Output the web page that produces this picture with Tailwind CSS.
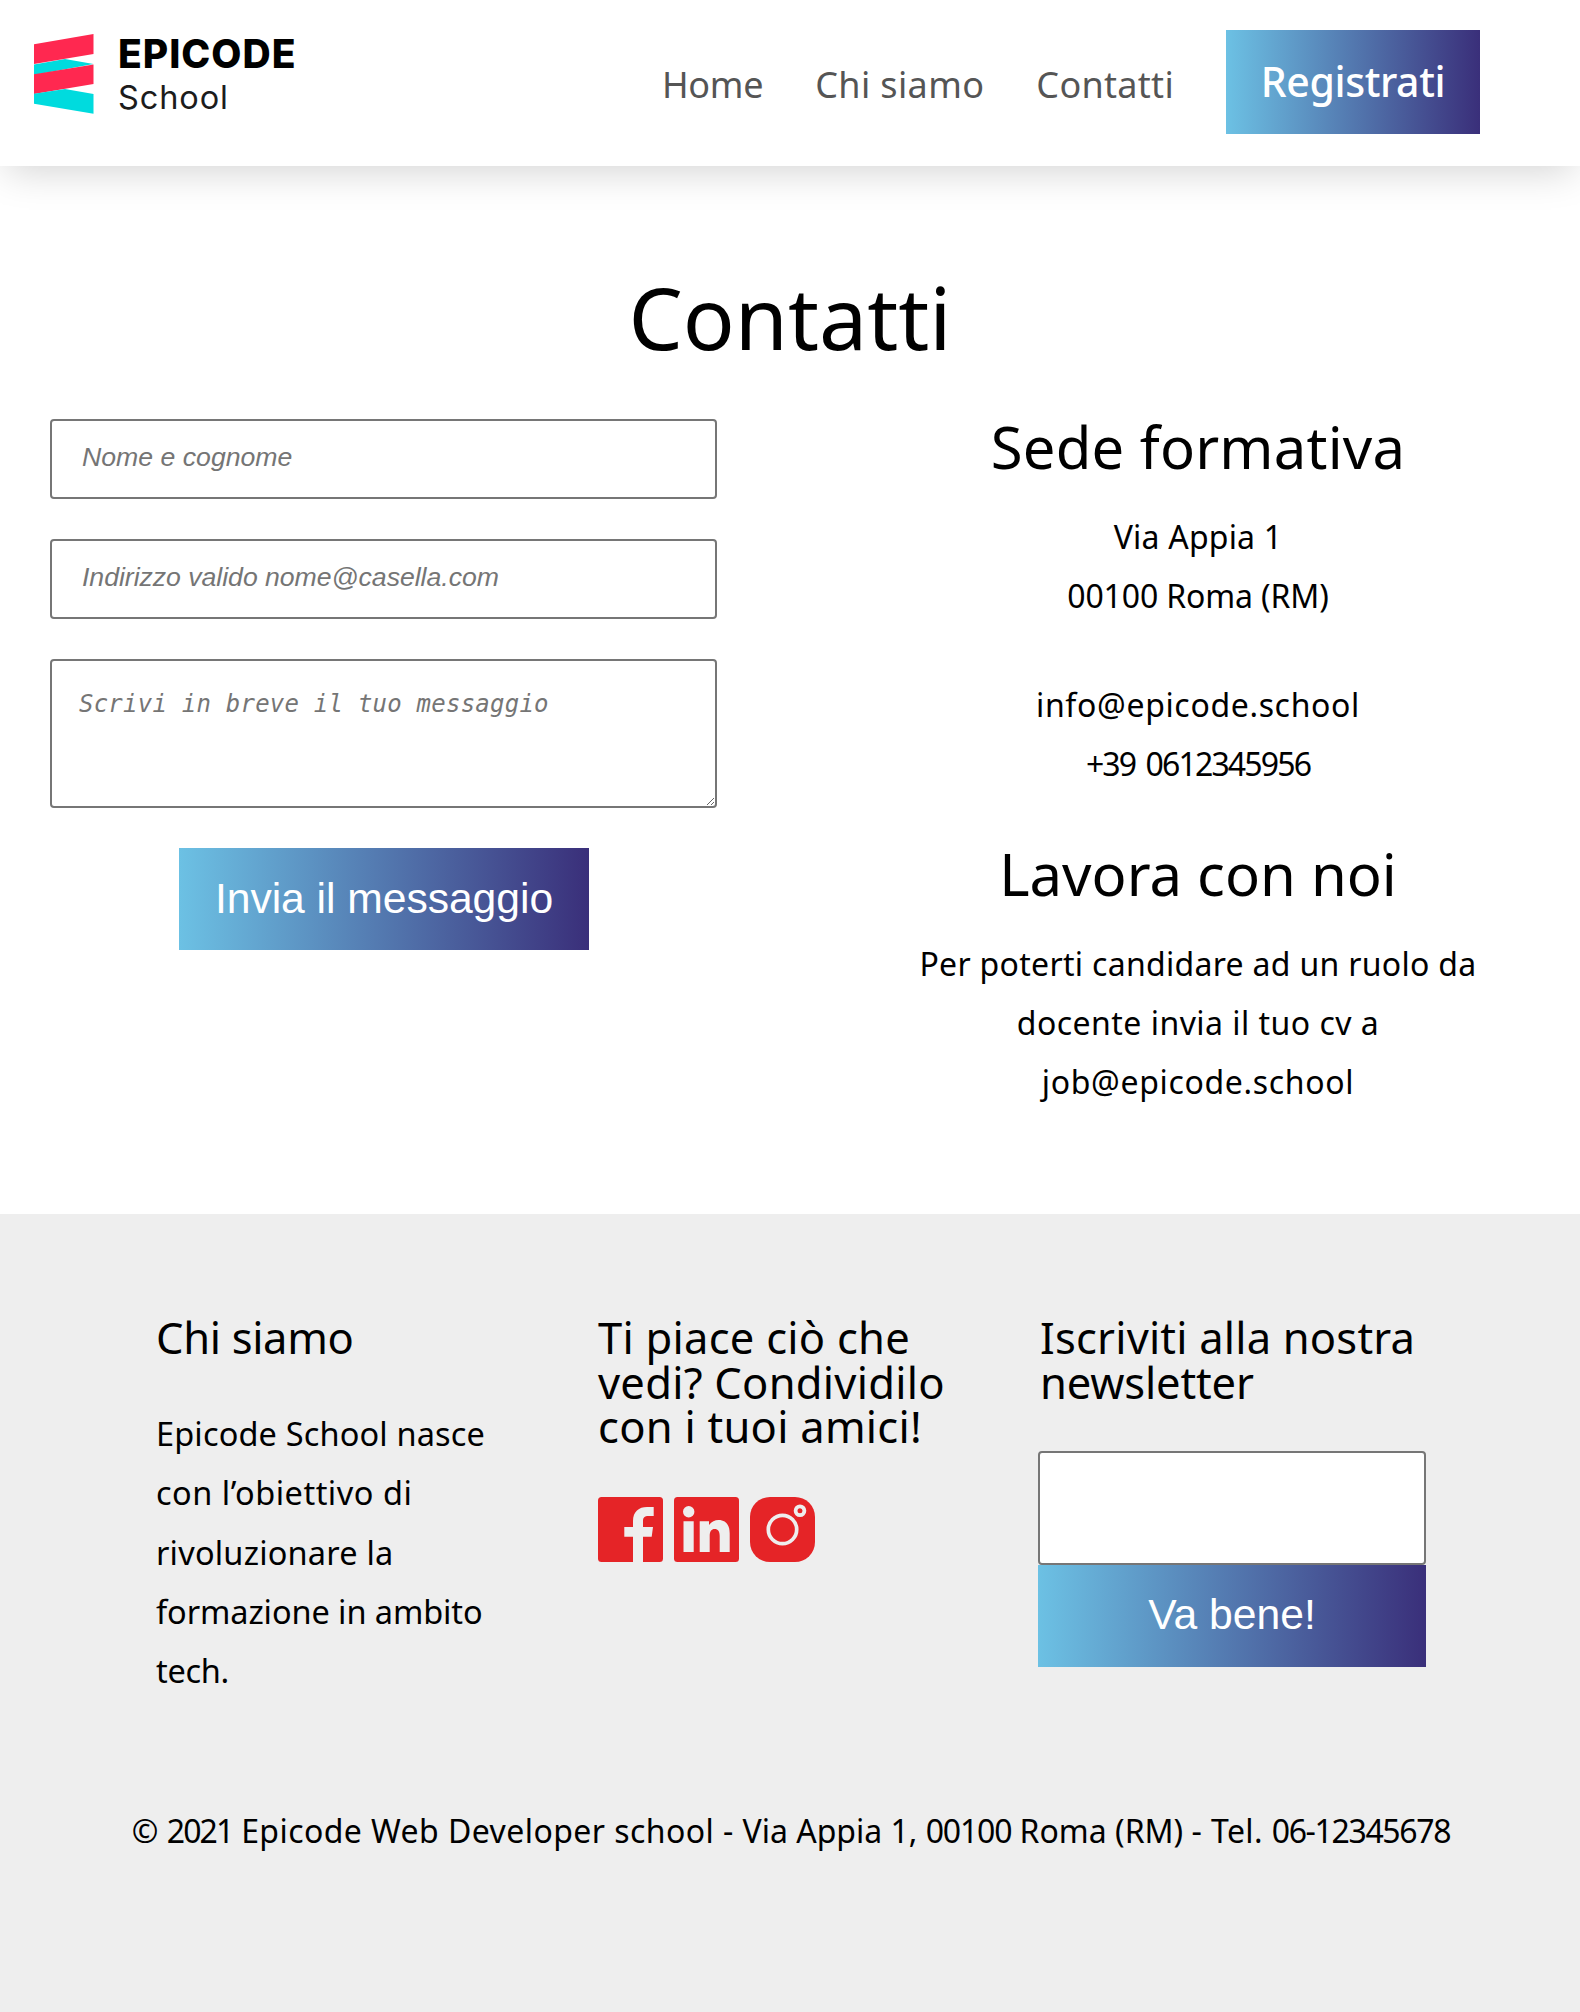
<!DOCTYPE html>
<html lang="it">
<head>
<meta charset="utf-8">
<title>Epicode School - Contatti</title>
<script src="https://cdn.jsdelivr.net/npm/@tailwindcss/browser@4"></script>
</head>
<body class="bg-white text-black font-['Noto_Sans',sans-serif]">
<div class="flex flex-col w-[1580px] h-[2012px] overflow-hidden">

  <header class="relative flex justify-between h-[166px] pl-[33px] pr-[100px] pt-[30px] bg-white shadow-[0_12px_36px_-6px_rgba(0,0,0,0.17)]">
    <a class="flex pt-1" aria-label="Epicode School">
      <svg class="w-[62px] h-[80px] shrink-0" viewBox="0 0 62 80">
        <path fill="#00dbde" d="M1 30.500 32 25 60.500 30 1 41z"/>
        <path fill="#ff2850" d="M1 10.300 60.500 0V20L1 30z"/>
        <path fill="#ff2850" d="M1 40.300 60.500 30.500V50L1 60z"/>
        <path fill="#00dbde" d="M1 59.800 32 55 60.500 60V79.800L1 69.800z"/>
      </svg>
      <span class="flex flex-col gap-[4px] pl-[23px] font-['Inter',sans-serif] leading-[40px]">
        <span class="text-[39px] font-extrabold tracking-[1px]">EPICODE</span>
        <span class="text-[32.5px] tracking-[0.9px] text-[#1c1c1c]">School</span>
      </span>
    </a>
    <nav class="flex gap-[52px] text-[36px] leading-[109px] text-[#555]">
      <a class="tracking-[-0.3px]">Home</a>
      <a class="tracking-[0.37px]">Chi siamo</a>
      <a class="tracking-[0.3px]">Contatti</a>
      <a class="w-[254px] h-[104px] text-center text-[41px] font-medium tracking-[-0.4px] leading-[102px] text-white bg-linear-to-r/srgb from-[#6cc1e4] to-[#3a2f7a]">Registrati</a>
    </nav>
  </header>

  <main class="h-[1048px] pt-[108px]">
    <h1 class="text-center text-[86px] leading-[86px]">Contatti</h1>
    <div class="flex mt-[58px]">
      <form class="flex flex-col gap-[40px] w-[912px] pl-[50px] pt-px font-['Liberation_Sans',sans-serif]">
        <input placeholder="Nome e cognome" class="w-[667px] h-[80px] px-[30px] pb-[3px] border-2 border-[#767676] rounded-[4px] bg-white text-[26.67px] italic placeholder:text-[#757575]">
        <input placeholder="Indirizzo valido nome@casella.com" class="w-[667px] h-[80px] px-[30px] pb-[3px] border-2 border-[#767676] rounded-[4px] bg-white text-[26.67px] italic tracking-[-0.04px] placeholder:text-[#757575]">
        <textarea placeholder="Scrivi in breve il tuo messaggio" class="w-[667px] h-[149px] px-[27px] pt-[27px] border-2 border-[#767676] rounded-[4px] bg-white font-['DejaVu_Sans_Mono',monospace] text-[24px] leading-[32px] italic tracking-[0.23px] placeholder:text-[#757575]"></textarea>
        <button type="button" class="w-[410px] h-[102px] ml-[129px] pb-[2px] text-[42.67px] tracking-[-0.05px] text-white bg-linear-to-r/srgb from-[#6cc1e4] to-[#3a2f7a]">Invia il messaggio</button>
      </form>
      <section class="w-[572px] text-center text-[32px] leading-[59px]">
        <h2 class="text-[58px] leading-[58px] tracking-[0.2px]">Sede formativa</h2>
        <p class="mt-[31px]"><span class="tracking-[0.2px]">Via Appia 1</span><br><span class="tracking-[-0.13px]">00100 Roma (RM)</span></p>
        <p class="mt-[50px]"><span class="tracking-[0.65px]">info@epicode.school</span><br><span class="tracking-[-1.85px] word-spacing-normal">+39<span class="tracking-[2px]"> </span>0612345956</span></p>
        <h2 class="mt-[52px] text-[58px] leading-[58px]">Lavora con noi</h2>
        <p class="mt-[31px]"><span class="tracking-[0.3px]">Per poterti candidare ad un ruolo da</span><br><span class="tracking-[0.47px]">docente invia il tuo cv a</span><br><span class="tracking-[0.66px]">job@epicode.school</span></p>
      </section>
    </div>
  </main>

  <footer class="h-[798px] pt-[101px] bg-[#eeeeee]">
    <div class="flex pl-[156px] h-[385px] text-[43.5px] leading-[44.5px]">
      <section class="w-[442px]">
        <h3 class="tracking-[-0.32px]">Chi siamo</h3>
        <p class="mt-[44.5px] text-[32.5px] leading-[59.25px]"><span class="tracking-[0.15px]">Epicode School nasce</span><br><span class="tracking-[0.51px]">con l’obiettivo di</span><br><span class="tracking-[0.2px]">rivoluzionare la</span><br><span class="tracking-[-0.09px]">formazione in ambito</span><br><span class="tracking-[-0.31px]">tech.</span></p>
      </section>
      <section class="w-[440px]">
        <h3 class="tracking-[0.26px]">Ti piace ciò che<br>vedi? Condividilo<br>con i tuoi amici!</h3>
        <div class="flex gap-[11px] mt-[48.5px]">
          <svg class="size-[65px]" viewBox="0 0 65 65">
            <rect width="65" height="65" rx="3.500" fill="#e52427"/>
            <path fill="#eee" d="M35 65V39.700H26.300V30H35V24C35 14.500 41 10 49 10H55.700V19H50.500C46.500 19 45 20.500 45 24.300V30H55L53.700 39.700H45V65z"/>
          </svg>
          <svg class="size-[65px]" viewBox="0 0 65 65">
            <rect width="65" height="65" rx="3.500" fill="#e52427"/>
            <circle cx="14.700" cy="14.700" r="5.700" fill="#eee"/>
            <path fill="#eee" d="M9.500 24.300H19.700V55H9.500zM25.700 24.300H35V28C37.500 24.500 41 23 44.500 23 52 23 55.700 28 55.700 36.500V55H45.700V39C45.700 34.500 44 32 40.700 32 37.400 32 35.700 34.500 35.700 39V55H25.700z"/>
          </svg>
          <svg class="size-[65px]" viewBox="0 0 65 65">
            <rect width="65" height="65" rx="20" fill="#e52427"/>
            <circle cx="32.500" cy="32.500" r="14.200" fill="none" stroke="#eee" stroke-width="3.700"/>
            <circle cx="50" cy="13.700" r="4.400" fill="none" stroke="#eee" stroke-width="3.800"/>
          </svg>
        </div>
      </section>
      <section class="w-[388px]">
        <h3 class="pl-[2px]"><span class="tracking-[0.2px]">Iscriviti alla nostra</span><br><span class="tracking-[-0.14px]">newsletter</span></h3>
        <input aria-label="Email" class="block w-full h-[114px] mt-[47px] px-[30px] border-2 border-[#767676] rounded-[4px] bg-white text-[26.67px]">
        <button type="button" class="block w-full h-[102px] pb-[3px] font-['Liberation_Sans',sans-serif] text-[42.67px] text-white bg-linear-to-r/srgb from-[#6cc1e4] to-[#3a2f7a]">Va bene!</button>
      </section>
    </div>
    <p class="mt-[101px] pl-[2px] text-center text-[32px] leading-[59px] whitespace-nowrap">© <span class="tracking-[-1.9px]">2021</span><span class="tracking-[0.43px]"> Epicode Web Developer school - </span>Via Appia 1, <span class="tracking-[-1.2px]">00100</span> Roma (RM) <span class="tracking-[0.4px]">- Tel. </span><span class="tracking-[-1.35px]">06-12345678</span></p>
  </footer>

</div>
</body>
</html>
